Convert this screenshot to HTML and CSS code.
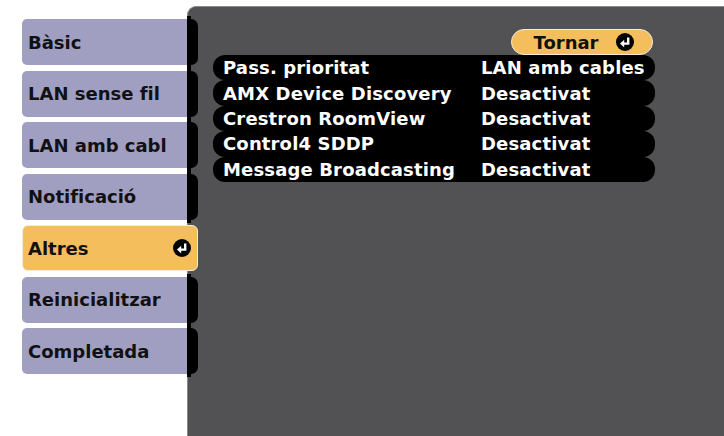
FILE: index.html
```html
<!DOCTYPE html>
<html lang="ca">
<head>
<meta charset="utf-8">
<title>Xarxa - Altres</title>
<link rel="stylesheet" href="styles.css">
</head>
<body>
<div class="screen">
  <nav class="menu">
    <div class="tab"><span class="label">Bàsic</span><span class="ear"></span></div>
    <div class="tab"><span class="label">LAN sense fil</span><span class="ear"></span></div>
    <div class="tab"><span class="label">LAN amb cabl</span><span class="ear"></span></div>
    <div class="tab"><span class="label">Notificació</span><span class="ear"></span></div>
    <div class="tab tab-active"><span class="label">Altres</span>
      <svg class="enter" viewBox="0 0 18 18" width="18" height="18"><circle cx="9" cy="9" r="9" fill="#000"/><path d="M12.2 4.5V10.6H7.5" fill="none" stroke="#fff" stroke-width="2.4"/><path d="M4 10.6L8.2 6.8V14.4Z" fill="#fff"/></svg>
    </div>
    <div class="tab"><span class="label">Reinicialitzar</span><span class="ear"></span></div>
    <div class="tab"><span class="label">Completada</span><span class="ear"></span></div>
  </nav>
  <main class="panel">
    <div class="back-row">
      <div class="back">Tornar
        <svg class="enter" viewBox="0 0 18 18" width="18" height="18"><circle cx="9" cy="9" r="9" fill="#000"/><path d="M12.2 4.5V10.6H7.5" fill="none" stroke="#fff" stroke-width="2.4"/><path d="M4 10.6L8.2 6.8V14.4Z" fill="#fff"/></svg>
      </div>
    </div>
    <div class="rows">
      <div class="row"><span>Pass. prioritat</span><span>LAN amb cables</span></div>
      <div class="row"><span>AMX Device Discovery</span><span>Desactivat</span></div>
      <div class="row"><span>Crestron RoomView</span><span>Desactivat</span></div>
      <div class="row"><span>Control4 SDDP</span><span>Desactivat</span></div>
      <div class="row"><span>Message Broadcasting</span><span>Desactivat</span></div>
    </div>
  </main>
</div>
</body>
</html>
```
FILE: styles.css
```css
html, body {
  margin: 0;
  padding: 0;
  background: #fff;
}
body {
  width: 724px;
  height: 436px;
  overflow: hidden;
  font-family: "DejaVu Sans", "Liberation Sans", sans-serif;
  font-weight: bold;
  font-size: 18px;
}
.screen {
  display: flex;
  height: 430px;
  padding-top: 6px;
}
.menu {
  position: relative;
  z-index: 1;
  display: flex;
  flex-direction: column;
  gap: 5.5px;
  padding: 13px 0 0 22px;
  width: 176px;
  margin-right: -11px;
  flex: none;
}
.tab {
  display: flex;
  height: 46px;
  width: 176px;
}
.label {
  display: flex;
  align-items: center;
  width: 165px;
  padding-left: 6px;
  box-sizing: border-box;
  background: #a09fc2;
  color: #111;
  border-radius: 5px 0 0 5px;
  white-space: nowrap;
}
.ear {
  position: relative;
  width: 11px;
  background: #000;
  border-radius: 0 7px 7px 0;
}
.ear::after {
  content: "";
  position: absolute;
  left: 0;
  top: -3px;
  bottom: -3px;
  width: 4px;
  background: #000;
}
.tab-active {
  box-sizing: border-box;
  background: #f5be5c;
  border: 1px solid #f3ecd8;
  border-radius: 6px;
  align-items: center;
  padding-right: 6px;
}
.tab-active .label {
  background: transparent;
  flex: 1;
  padding-left: 5px;
  height: 100%;
}
.enter {
  display: block;
  flex: none;
}
.panel {
  flex: 1;
  background: #525254;
  border-top: 1px solid #8a8a8c;
  border-left: 1px solid #8a8a8c;
  border-top-left-radius: 9px;
  padding: 22px 69px 0 25px;
}
.back-row {
  display: flex;
  justify-content: flex-end;
  padding-right: 2px;
}
.back {
  box-sizing: border-box;
  width: 142px;
  height: 26px;
  display: flex;
  align-items: center;
  justify-content: center;
  gap: 18px;
  padding-left: 4px;
  background: #f5be5c;
  border: 1px solid #f3ecd8;
  border-radius: 13px;
  color: #111;
}
.rows {
  display: flex;
  flex-direction: column;
}
.row {
  display: grid;
  grid-template-columns: 258px 1fr;
  align-items: center;
  height: 25.4px;
  padding-left: 10px;
  background: #000;
  border-radius: 12px;
  color: #fff;
  letter-spacing: 0.15px;
  white-space: nowrap;
}
```
